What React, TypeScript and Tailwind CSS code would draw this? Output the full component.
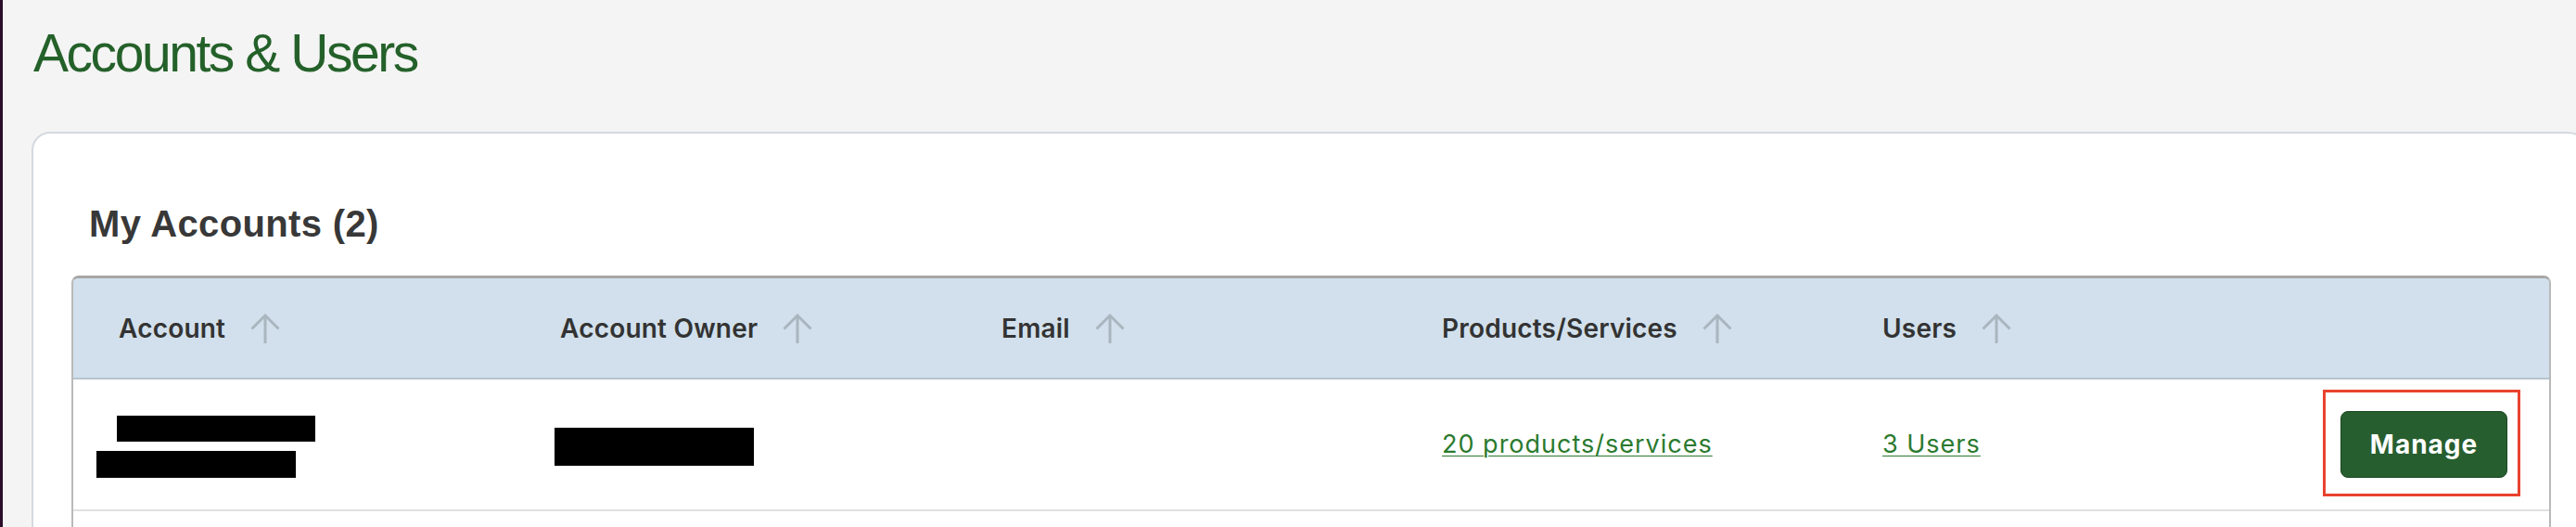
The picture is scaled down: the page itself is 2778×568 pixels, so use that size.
import React from "react";

const SortArrow = () => (
  <svg width="32" height="34" viewBox="0 0 32 34" fill="none" className="shrink-0">
    <path d="M16 33V3" stroke="#a9b6bf" strokeWidth="3" />
    <path d="M1.5 17.5L16 3L30.5 17.5" stroke="#a9b6bf" strokeWidth="3" />
  </svg>
);

const HeaderCell = ({ label }: { label: string }) => (
  <div className="flex items-center pl-[49px] gap-[27px]">
    <span className="text-[28px] font-semibold text-[#333333] tracking-[0.2px] [font-family:Inter,'Liberation_Sans',sans-serif]">
      {label}
    </span>
    <SortArrow />
  </div>
);

export default function App() {
  return (
    <div className="flex h-[568px] w-full overflow-hidden bg-[#f4f4f4]">
      <div className="w-[3px] shrink-0 bg-[#2a0e2a]" />
      <div className="flex-1 min-w-0 pl-[31px] pt-[29px]">
        <h1 className="ml-[2px] h-[57px] text-[57px] leading-[57px] tracking-[-2.45px] text-[#24612a] [font-family:'Liberation_Sans',Arial,sans-serif] whitespace-nowrap">
          Accounts &amp; Users
        </h1>
        <div className="mt-[56px] w-[2756px] shrink-0 rounded-[20px] border-2 border-[#d5d9e0] bg-white pt-[77px] pl-[41px] pb-[40px]">
          <h2 className="ml-[19px] h-[40px] text-[40px] leading-[40px] font-bold tracking-[0.35px] text-[#383838] [font-family:'Liberation_Sans',Arial,sans-serif] whitespace-nowrap">
            My Accounts (2)
          </h2>
          <div className="mt-[36px] w-[2674px] rounded-t-[8px] border-x-2 border-t-[3px] border-x-[#b9b9b9] border-t-[#a6a6a6] overflow-hidden">
            <div className="grid h-[109px] grid-cols-[476px_476px_475px_475px_1fr_auto] border-b-2 border-[#b6c4ce] bg-[#d1e0ec]">
              <HeaderCell label="Account" />
              <HeaderCell label="Account Owner" />
              <HeaderCell label="Email" />
              <HeaderCell label="Products/Services" />
              <HeaderCell label="Users" />
              <div />
            </div>
            <div className="grid h-[142px] grid-cols-[476px_476px_475px_475px_1fr_auto] border-b-2 border-[#e0e0e0] bg-white">
              <div className="flex flex-col pt-[39px]">
                <div className="ml-[47px] h-[28px] w-[214px] bg-black" />
                <div className="ml-[25px] mt-[10px] h-[29px] w-[215px] bg-black" />
              </div>
              <div className="flex flex-col pt-[52px]">
                <div className="ml-[43px] h-[41px] w-[215px] bg-black" />
              </div>
              <div />
              <div className="flex items-center pl-[49px]">
                <a className="text-[27px] leading-[28px] text-[#2b7a2f] underline decoration-1 underline-offset-[3px] tracking-[1px] [font-family:Inter,'Liberation_Sans',sans-serif] whitespace-nowrap cursor-pointer">
                  20 products/services
                </a>
              </div>
              <div className="flex items-center pl-[49px]">
                <a className="text-[27px] leading-[28px] text-[#2b7a2f] underline decoration-1 underline-offset-[3px] tracking-[1px] [font-family:Inter,'Liberation_Sans',sans-serif] whitespace-nowrap cursor-pointer">
                  3 Users
                </a>
              </div>
              <div className="flex items-center pr-[45px]">
                <div className="relative">
                  <button className="flex h-[72px] w-[180px] items-center justify-center rounded-[8px] border border-[#1b4722] bg-[#275e2f] text-[28px] font-bold tracking-[1px] text-white [font-family:Inter,'Liberation_Sans',sans-serif]">
                    Manage
                  </button>
                  <span className="pointer-events-none absolute -left-[19px] -right-[14px] -top-[23px] -bottom-[20px] border-[3px] border-[#e8432e]" />
                </div>
              </div>
            </div>
            <div className="h-[60px] bg-white" />
          </div>
        </div>
      </div>
    </div>
  );
}
